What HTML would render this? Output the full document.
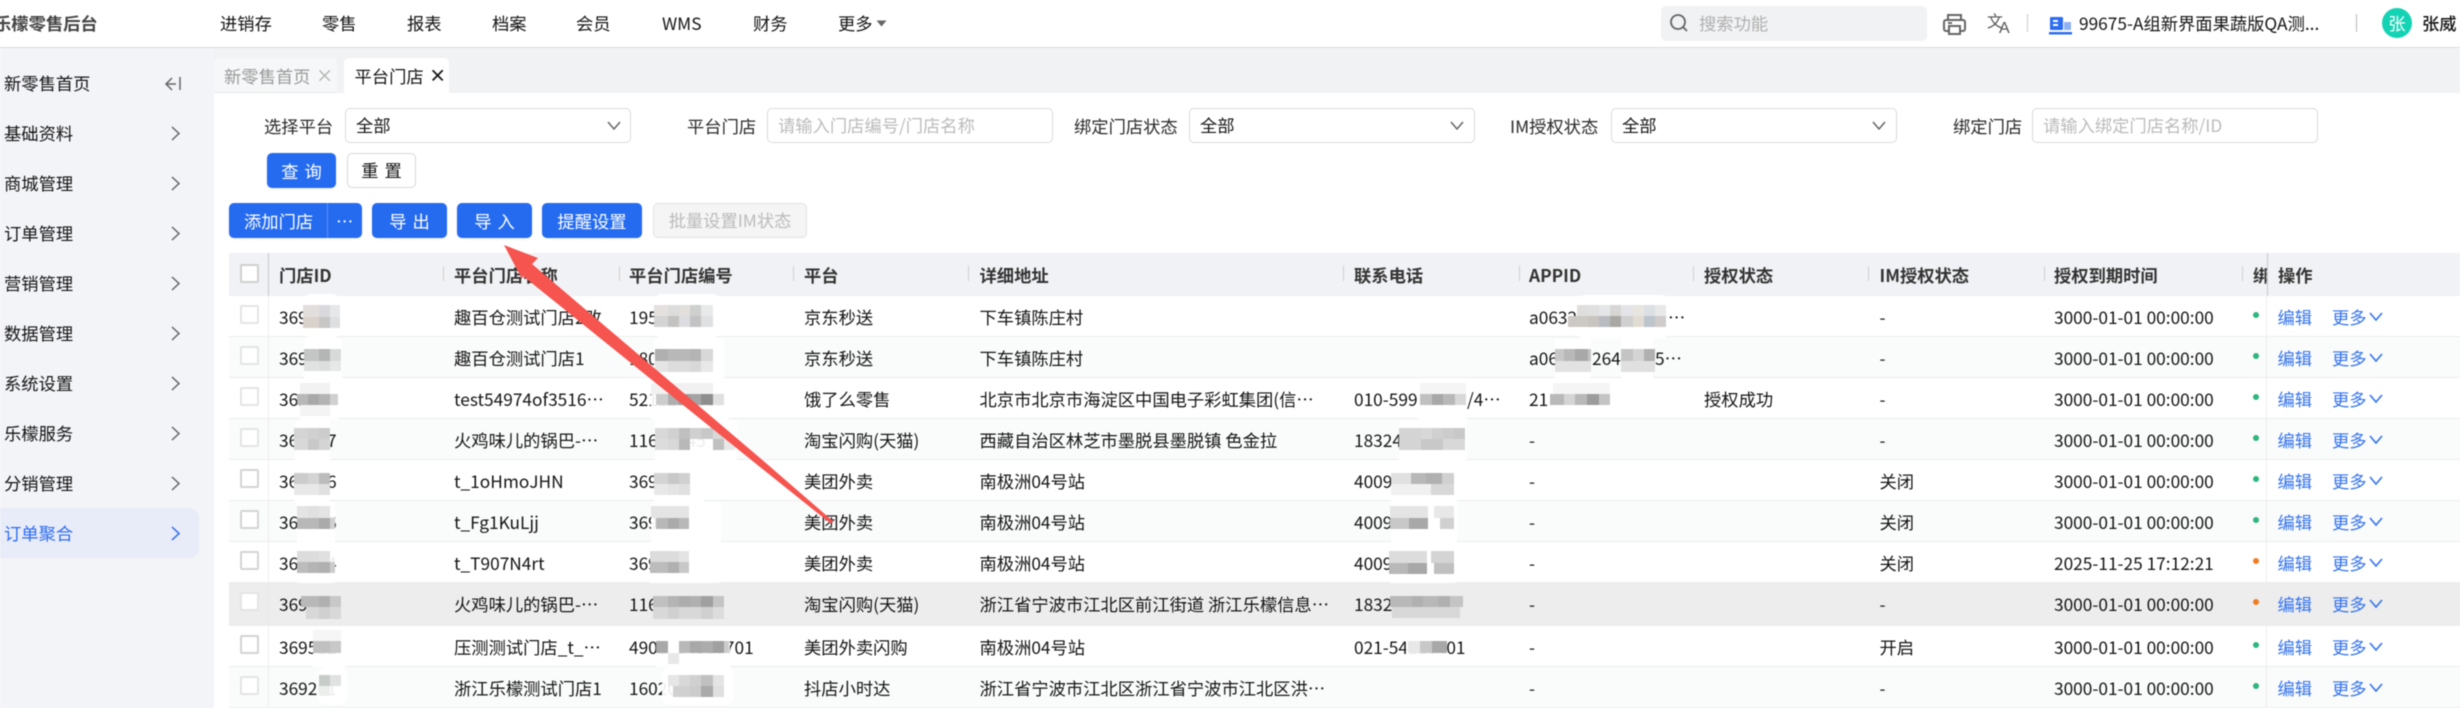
<!DOCTYPE html>
<html lang="zh"><head><meta charset="utf-8"><title>平台门店</title>
<style>
*{box-sizing:border-box;margin:0;padding:0}
html,body{width:2460px;height:708px;overflow:hidden;background:#fff}
body{position:relative;font:17.3px/1.2 "Liberation Sans","Noto Sans CJK SC",sans-serif;color:#151515;font-family:"Noto Sans CJK SC","Liberation Sans",sans-serif;filter:blur(.4px)}
.a{position:absolute;white-space:nowrap}
.top{left:0;top:0;width:2460px;height:48px;background:#fff;border-bottom:1px solid #dcdcdc;box-shadow:0 1px 1px #eee}
.n{top:0;line-height:46px}
.side{left:0;top:48px;width:214px;height:660px;background:#f3f4f8}
.si{left:4px;line-height:24px}
.tabs{left:214px;top:48px;width:2246px;height:45px;background:#f1f2f4}
.in{top:108px;height:35px;width:286px;border:1.5px solid #dadada;border-radius:5px;background:#fff;line-height:31px;padding-left:10px}
.lb{top:108px;line-height:35px;color:#2a2a2a}
.ph{color:#bbb}
.btn{height:35px;line-height:35px;background:#256bf0;color:#fff;border-radius:5px;text-align:center;box-shadow:0 1px 2px rgba(0,0,0,.08)}
.th{left:229px;top:253px;width:2231px;height:43px;background:#f1f2f5}
.th span{position:absolute;top:0;line-height:43px;font-weight:700;color:#333;white-space:nowrap}
.th i{position:absolute;top:13px;width:1px;height:15px;background:#cfcfcf}
.r{position:absolute;left:229px;width:2231px;border-bottom:1.5px solid #ececec;background:#fff}
.r.g{background:#fafbfb}.r.h{background:#ededed;border-bottom-color:#ededed}
.r span{position:absolute;top:0;white-space:nowrap;line-height:41px}
.r b{position:absolute;left:11px;top:9px;width:19px;height:19px;border:2px solid #e4e4e4;border-radius:2px;background:#fff}
.r u{position:absolute;left:39px;top:0;bottom:0;width:1px;background:#eee}
.r s{position:absolute;left:2037px;top:0;bottom:0;width:1px;background:#eee}
.r em{position:absolute;left:2024px;top:16px;width:6px;height:6px;border-radius:50%;background:#2eb67d}
.r em.o{background:#f07d22}
.id{left:50px}.nm{left:225px}.pi{left:400px}.pl{left:575px}.ad{left:750.5px}.ph2{left:1125px}.ap{left:1300px}.au{left:1475px}.im{left:1650.5px}.tm{left:1825px}
.r span.e{left:2048.5px;color:#3574ee}.r span.m{left:2103px;color:#3574ee}
.r svg{position:absolute;left:2140px;top:15.5px}
</style></head><body>

<div class="a top"></div>
<div class="a n" style="left:-6px;font-weight:700;color:#444">乐檬零售后台</div>
<div class="a n" style="left:220px">进销存</div>
<div class="a n" style="left:322px">零售</div>
<div class="a n" style="left:407px">报表</div>
<div class="a n" style="left:492px">档案</div>
<div class="a n" style="left:576px">会员</div>
<div class="a n" style="left:662px">WMS</div>
<div class="a n" style="left:753px">财务</div>
<div class="a n" style="left:838px">更多</div>
<svg class="a" style="left:876px;top:20px" width="11" height="7"><path d="M0.5 0.5h10L5.5 6.5z" fill="#666"/></svg>

<div class="a" style="left:1661px;top:6px;width:266px;height:35px;background:#f1f2f4;border-radius:5px"></div>
<svg class="a" style="left:1669px;top:14px" width="20" height="18" fill="none" stroke="#666" stroke-width="1.8"><circle cx="9" cy="8" r="7"/><path d="M14 13l4 4"/></svg>
<div class="a n" style="left:1699px;color:#b0b0b0">搜索功能</div>
<svg class="a" style="left:1943px;top:13px" width="23" height="22" fill="none" stroke="#666" stroke-width="2"><path d="M5 7V2h13v5"/><rect x="1" y="7" width="21" height="11" rx="2"/><rect x="6" y="13" width="11" height="8" fill="#fff"/><path d="M5 10h4"/></svg>
<svg class="a" style="left:1987px;top:11px" width="26" height="24"><text x="0" y="16" font-size="16" fill="#555" font-family="Noto Sans CJK SC,sans-serif">文</text><text x="12" y="22" font-size="16" fill="#555" font-family="Liberation Sans,sans-serif">A</text></svg>
<div class="a" style="left:2027px;top:14px;width:1px;height:18px;background:#ccc"></div>
<svg class="a" style="left:2049px;top:17px" width="23" height="18"><rect x="1" y="0" width="13" height="13" rx="1" fill="#2b6cf0"/><rect x="15" y="5" width="7" height="8" fill="#8fb2f5"/><rect x="0" y="15" width="23" height="2.5" fill="#2b6cf0"/><rect x="4" y="3" width="5" height="2" fill="#fff"/><rect x="4" y="7" width="5" height="2" fill="#fff"/></svg>
<div class="a n" style="left:2079px">99675-A组新界面果蔬版QA测...</div>
<div class="a" style="left:2356px;top:14px;width:1px;height:18px;background:#bbb"></div>
<div class="a" style="left:2382px;top:8px;width:30px;height:30px;border-radius:50%;background:#14d3b5;color:#fff;text-align:center;line-height:29px">张</div>
<div class="a n" style="left:2422px;font-weight:500">张威</div>

<div class="a side"></div>
<div class="a" style="left:0;top:508px;width:199px;height:50px;background:#e8ebf8;border-radius:0 10px 10px 0"></div>
<div class="a si" style="top:71px">新零售首页</div>
<div class="a si" style="top:121px">基础资料</div>
<div class="a si" style="top:171px">商城管理</div>
<div class="a si" style="top:221px">订单管理</div>
<div class="a si" style="top:271px">营销管理</div>
<div class="a si" style="top:321px">数据管理</div>
<div class="a si" style="top:371px">系统设置</div>
<div class="a si" style="top:421px">乐檬服务</div>
<div class="a si" style="top:471px">分销管理</div>
<div class="a si" style="top:521px;color:#2b6bf3">订单聚合</div>
<svg class="a" style="left:0;top:0" width="214" height="708" fill="none" stroke="#666" stroke-width="1.5">
<path d="M172 78l-6 6 6 6M166 84h10M180 77v13"/>
<path d="M172 127l7 6.500-7 6.500M172 177l7 6.500-7 6.500M172 227l7 6.500-7 6.500M172 277l7 6.500-7 6.500M172 327l7 6.500-7 6.500M172 377l7 6.500-7 6.500M172 427l7 6.500-7 6.500M172 477l7 6.500-7 6.500"/>
<path d="M172 527l7 6.500-7 6.500" stroke="#2b6bf3"/>
</svg>

<div class="a tabs"></div>
<div class="a" style="left:214px;top:58px;width:123px;height:35px;background:#f6f7f8;border-radius:5px 5px 0 0;border-bottom:1px solid #e6e6e6"></div>
<div class="a" style="left:224px;top:58px;line-height:35px;color:#999">新零售首页</div>
<div class="a" style="left:316px;top:57px;line-height:35px;color:#aaa">×</div>
<div class="a" style="left:344px;top:58px;width:105px;height:35px;background:#fff;border-radius:5px 5px 0 0"></div>
<div class="a" style="left:354.500px;top:58px;line-height:35px">平台门店</div>
<div class="a" style="left:429px;top:57px;line-height:35px;font-weight:700">×</div>

<div class="a lb" style="left:264px">选择平台</div>
<div class="a in" style="left:345px">全部</div>
<div class="a lb" style="left:687px">平台门店</div>
<div class="a in ph" style="left:767px">请输入门店编号/门店名称</div>
<div class="a lb" style="left:1074px">绑定门店状态</div>
<div class="a in" style="left:1189px">全部</div>
<div class="a lb" style="left:1510px">IM授权状态</div>
<div class="a in" style="left:1611px">全部</div>
<div class="a lb" style="left:1953px">绑定门店</div>
<div class="a in ph" style="left:2032px">请输入绑定门店名称/ID</div>
<svg class="a" style="left:0;top:0" width="2460" height="150" fill="none" stroke="#666" stroke-width="1.5"><path d="M608 122l6 7 6-7M1451 122l6 7 6-7M1873 122l6 7 6-7"/></svg>

<div class="a btn" style="left:267px;top:153px;width:69px;letter-spacing:6px;padding-left:6px">查询</div>
<div class="a" style="left:347px;top:153px;width:69px;height:35px;line-height:32px;border:1.5px solid #d8d8d8;border-radius:5px;text-align:center;letter-spacing:6px;padding-left:6px">重置</div>

<div class="a btn" style="left:229px;top:203px;width:133px;text-align:left;padding-left:15px">添加门店</div>
<div class="a" style="left:327px;top:203px;width:1px;height:35px;background:#5c8ff5"></div>
<div class="a" style="left:336px;top:203px;line-height:35px;color:#fff">…</div>
<div class="a btn" style="left:372px;top:203px;width:75px;letter-spacing:6px;padding-left:6px">导出</div>
<div class="a btn" style="left:457px;top:203px;width:75px;letter-spacing:6px;padding-left:6px">导入</div>
<div class="a btn" style="left:542px;top:203px;width:100px">提醒设置</div>
<div class="a" style="left:653px;top:203px;width:154px;height:35px;line-height:32px;background:#f5f5f5;border:1.5px solid #e2e2e2;border-radius:5px;text-align:center;color:#bbb">批量设置IM状态</div>

<div class="a th">
<b style="position:absolute;left:11px;top:11px;width:19px;height:19px;border:2px solid #d0d0d0;border-radius:2px;background:#fff"></b>
<i style="left:39px;top:0;height:43px;background:#c8c8c8"></i>
<span style="left:50px">门店ID</span><i style="left:214px"></i>
<span style="left:225px">平台门店名称</span><i style="left:390px"></i>
<span style="left:400px">平台门店编号</span><i style="left:564px"></i>
<span style="left:575px">平台</span><i style="left:739px"></i>
<span style="left:750.500px">详细地址</span><i style="left:1114px"></i>
<span style="left:1125px">联系电话</span><i style="left:1290px"></i>
<span style="left:1300px">APPID</span><i style="left:1464px"></i>
<span style="left:1475px">授权状态</span><i style="left:1639px"></i>
<span style="left:1650.500px">IM授权状态</span><i style="left:1815px"></i>
<span style="left:1825px">授权到期时间</span><i style="left:2013px"></i>
<span style="left:2024px;width:14px;overflow:hidden">绑定</span>
<i style="left:2038px;top:0;height:43px;background:#c8c8c8"></i>
<span style="left:2049px">操作</span>
</div>

<div class="r" style="top:296px;height:41px"><b></b><u></u><s></s><span class="id">369123</span><span class="nm">趣百仓测试门店2改</span><span class="pi">19512345</span><span class="pl">京东秒送</span><span class="ad">下车镇陈庄村</span><span class="ap">a0632</span><span class="ap" style="left:1439px">…</span><span class="im">-</span><span class="tm">3000-01-01 00:00:00</span><em></em><span class="e">编辑</span><span class="m">更多</span><svg width="15" height="10" fill="none" stroke="#3574ee" stroke-width="1.6"><path d="M1 1l6 7 6-7"/></svg></div>
<div class="r g" style="top:337px;height:41px"><b></b><u></u><s></s><span class="id">369123</span><span class="nm">趣百仓测试门店1</span><span class="pi">18012345</span><span class="pl">京东秒送</span><span class="ad">下车镇陈庄村</span><span class="ap">a06</span><span class="ap" style="left:1363px">264</span><span class="ap" style="left:1426px">5…</span><span class="im">-</span><span class="tm">3000-01-01 00:00:00</span><em></em><span class="e">编辑</span><span class="m">更多</span><svg width="15" height="10" fill="none" stroke="#3574ee" stroke-width="1.6"><path d="M1 1l6 7 6-7"/></svg></div>
<div class="r" style="top:378px;height:41px"><b></b><u></u><s></s><span class="id">361234</span><span class="nm">test54974of3516…</span><span class="pi">5211234567</span><span class="pl">饿了么零售</span><span class="ad">北京市北京市海淀区中国电子彩虹集团(信…</span><span class="ph2">010-599</span><span class="ph2" style="left:1238px">/4…</span><span class="ap">21</span><span class="au">授权成功</span><span class="im">-</span><span class="tm">3000-01-01 00:00:00</span><em></em><span class="e">编辑</span><span class="m">更多</span><svg width="15" height="10" fill="none" stroke="#3574ee" stroke-width="1.6"><path d="M1 1l6 7 6-7"/></svg></div>
<div class="r g" style="top:419px;height:41px"><b></b><u></u><s></s><span class="id">361237</span><span class="nm">火鸡味儿的锅巴-…</span><span class="pi">11612345</span><span class="pl">淘宝闪购(天猫)</span><span class="ad">西藏自治区林芝市墨脱县墨脱镇 色金拉</span><span class="ph2">18324</span><span class="ap">-</span><span class="im">-</span><span class="tm">3000-01-01 00:00:00</span><em></em><span class="e">编辑</span><span class="m">更多</span><svg width="15" height="10" fill="none" stroke="#3574ee" stroke-width="1.6"><path d="M1 1l6 7 6-7"/></svg></div>
<div class="r" style="top:460px;height:41px"><b style="border-color:#d4d4d4"></b><u></u><s></s><span class="id">361236</span><span class="nm">t_1oHmoJHN</span><span class="pi">369123</span><span class="pl">美团外卖</span><span class="ad">南极洲04号站</span><span class="ph2">4009</span><span class="ap">-</span><span class="im">关闭</span><span class="tm">3000-01-01 00:00:00</span><em></em><span class="e">编辑</span><span class="m">更多</span><svg width="15" height="10" fill="none" stroke="#3574ee" stroke-width="1.6"><path d="M1 1l6 7 6-7"/></svg></div>
<div class="r g" style="top:501px;height:41px"><b style="border-color:#d4d4d4"></b><u></u><s></s><span class="id">361236</span><span class="nm">t_Fg1KuLjj</span><span class="pi">369123</span><span class="pl">美团外卖</span><span class="ad">南极洲04号站</span><span class="ph2">4009</span><span class="ap">-</span><span class="im">关闭</span><span class="tm">3000-01-01 00:00:00</span><em></em><span class="e">编辑</span><span class="m">更多</span><svg width="15" height="10" fill="none" stroke="#3574ee" stroke-width="1.6"><path d="M1 1l6 7 6-7"/></svg></div>
<div class="r" style="top:542px;height:41px"><b style="border-color:#d4d4d4"></b><u></u><s></s><span class="id">361234</span><span class="nm">t_T907N4rt</span><span class="pi">369123</span><span class="pl">美团外卖</span><span class="ad">南极洲04号站</span><span class="ph2">4009</span><span class="ap">-</span><span class="im">关闭</span><span class="tm">2025-11-25 17:12:21</span><em class="o"></em><span class="e">编辑</span><span class="m">更多</span><svg width="15" height="10" fill="none" stroke="#3574ee" stroke-width="1.6"><path d="M1 1l6 7 6-7"/></svg></div>
<div class="r h" style="top:583px;height:43px"><b></b><u style="background:#e6e6e6"></u><span class="id">369123</span><span class="nm">火鸡味儿的锅巴-…</span><span class="pi">11612345</span><span class="pl">淘宝闪购(天猫)</span><span class="ad">浙江省宁波市江北区前江街道 浙江乐檬信息…</span><span class="ph2">1832</span><span class="ap">-</span><span class="im">-</span><span class="tm">3000-01-01 00:00:00</span><em class="o"></em><span class="e">编辑</span><span class="m">更多</span><svg width="15" height="10" fill="none" stroke="#3574ee" stroke-width="1.6"><path d="M1 1l6 7 6-7"/></svg></div>
<div class="r" style="top:626px;height:41px"><b style="border-color:#d4d4d4"></b><u></u><s></s><span class="id">369512</span><span class="nm">压测测试门店_t_…</span><span class="pi">4901234567701</span><span class="pl">美团外卖闪购</span><span class="ad">南极洲04号站</span><span class="ph2">021-54123401</span><span class="ap">-</span><span class="im">开启</span><span class="tm">3000-01-01 00:00:00</span><em></em><span class="e">编辑</span><span class="m">更多</span><svg width="15" height="10" fill="none" stroke="#3574ee" stroke-width="1.6"><path d="M1 1l6 7 6-7"/></svg></div>
<div class="r g" style="top:667px;height:41px"><b></b><u></u><s></s><span class="id">369201</span><span class="nm">浙江乐檬测试门店1</span><span class="pi">1602012345</span><span class="pl">抖店小时达</span><span class="ad">浙江省宁波市江北区浙江省宁波市江北区洪…</span><span class="ap">-</span><span class="im">-</span><span class="tm">3000-01-01 00:00:00</span><em></em><span class="e">编辑</span><span class="m">更多</span><svg width="15" height="10" fill="none" stroke="#3574ee" stroke-width="1.6"><path d="M1 1l6 7 6-7"/></svg></div>

<svg class="a" style="left:0;top:0" width="2460" height="708">
<!-- white smears -->
<g fill="#fff" fill-opacity=".92">
<rect x="303" y="294" width="37" height="44" rx="8"/><rect x="304" y="338" width="38" height="42"/><rect x="300" y="380" width="38" height="40"/><rect x="295" y="420" width="35" height="41"/><rect x="294" y="461" width="36" height="41"/><rect x="297" y="502" width="38" height="41"/><rect x="297" y="543" width="38" height="40"/><rect x="313" y="627" width="34" height="40"/><rect x="318" y="667" width="29" height="38" rx="8"/>
<rect x="654" y="294" width="66" height="44" rx="8"/><rect x="654" y="338" width="70" height="42"/><rect x="651" y="380" width="78" height="40"/><rect x="655" y="420" width="82" height="41"/><rect x="654" y="461" width="50" height="41"/><rect x="651" y="502" width="70" height="41"/><rect x="650" y="543" width="70" height="40"/><rect x="656" y="627" width="74" height="40"/><rect x="662" y="667" width="72" height="38" rx="8"/>
<rect x="1418" y="379" width="48" height="41"/><rect x="1399" y="420" width="68" height="41"/><rect x="1391" y="461" width="66" height="41"/><rect x="1391" y="502" width="66" height="41"/><rect x="1390" y="543" width="66" height="40"/><rect x="1406" y="627" width="41" height="38"/>
<rect x="1577" y="295" width="92" height="44" rx="8"/><rect x="1555" y="339" width="36" height="40"/><rect x="1621" y="339" width="32" height="40"/><rect x="1550" y="380" width="60" height="38"/>
</g>
<g shape-rendering="crispEdges">
<!-- ID col -->
<rect x="303" y="305" width="16" height="12" fill="#e2dedb"/><rect x="319" y="305" width="11" height="12" fill="#d9d9dd"/><rect x="330" y="305" width="10" height="12" fill="#e5e7e8"/><rect x="303" y="317" width="16" height="11" fill="#d9d1cc"/><rect x="319" y="317" width="11" height="11" fill="#c8c6c4"/><rect x="330" y="317" width="10" height="11" fill="#dddfe1"/>
<rect x="304" y="349" width="15" height="12" fill="#c4c6c6"/><rect x="319" y="349" width="11" height="12" fill="#b4b6b6"/><rect x="330" y="349" width="11" height="12" fill="#d8dada"/><rect x="304" y="361" width="15" height="10" fill="#e0e2e2"/><rect x="319" y="361" width="11" height="10" fill="#dcdede"/><rect x="330" y="361" width="11" height="10" fill="#e6e8e8"/>
<rect x="300" y="383" width="30" height="11" fill="#f2f2f2"/><rect x="297" y="394" width="11" height="11" fill="#b8b8b8"/><rect x="308" y="394" width="11" height="11" fill="#a8a8a8"/><rect x="319" y="394" width="11" height="11" fill="#b4b4b4"/><rect x="330" y="394" width="8" height="11" fill="#d0d0d0"/><rect x="300" y="405" width="30" height="11" fill="#f4f4f4"/>
<rect x="294" y="428" width="14" height="11" fill="#d4d4d4"/><rect x="308" y="428" width="11" height="11" fill="#d0d0d0"/><rect x="319" y="428" width="11" height="11" fill="#ccc"/><rect x="294" y="439" width="14" height="11" fill="#d8d8d8"/><rect x="308" y="439" width="11" height="11" fill="#c8c8c8"/><rect x="319" y="439" width="11" height="11" fill="#d4d4d4"/>
<rect x="294" y="473" width="14" height="11" fill="#ccc"/><rect x="308" y="473" width="11" height="11" fill="#d4d4d4"/><rect x="319" y="473" width="11" height="11" fill="#bcbcbc"/><rect x="294" y="484" width="14" height="11" fill="#e8e8e8"/><rect x="308" y="484" width="11" height="11" fill="#e8e8e8"/><rect x="319" y="484" width="11" height="11" fill="#e0e0e0"/>
<rect x="297" y="506" width="11" height="12" fill="#e4e4e4"/><rect x="308" y="506" width="11" height="12" fill="#e0e0e0"/><rect x="319" y="506" width="11" height="12" fill="#e4e4e4"/><rect x="297" y="518" width="11" height="11" fill="#b8b8b8"/><rect x="308" y="518" width="11" height="11" fill="#b8b8b8"/><rect x="319" y="518" width="11" height="11" fill="#aaa"/><rect x="330" y="518" width="5" height="11" fill="#d0d0d0"/>
<rect x="297" y="551" width="11" height="11" fill="#dcdcdc"/><rect x="308" y="551" width="11" height="11" fill="#dcdcdc"/><rect x="319" y="551" width="11" height="11" fill="#e0e0e0"/><rect x="297" y="562" width="11" height="11" fill="#bcbcbc"/><rect x="308" y="562" width="11" height="11" fill="#b4b4b4"/><rect x="319" y="562" width="11" height="11" fill="#b0b0b0"/><rect x="330" y="562" width="5" height="11" fill="#ccc"/>
<rect x="301" y="596" width="18" height="11" fill="#b8b8b8"/><rect x="319" y="596" width="11" height="11" fill="#b0b0b0"/><rect x="330" y="596" width="11" height="11" fill="#c8c8c8"/><rect x="306" y="607" width="13" height="12" fill="#d8d8d8"/><rect x="319" y="607" width="11" height="12" fill="#d0d0d0"/><rect x="330" y="607" width="11" height="12" fill="#d8d8d8"/>
<rect x="313" y="630" width="28" height="11" fill="#f6f6f6"/><rect x="313" y="641" width="17" height="12" fill="#c0c0c0"/><rect x="330" y="641" width="11" height="12" fill="#c8c8c8"/>
<rect x="319" y="675" width="11" height="11" fill="#c8ccc8"/><rect x="330" y="675" width="11" height="11" fill="#e0e2e2"/><rect x="319" y="686" width="11" height="10" fill="#eceeec"/>
<!-- platform id col -->
<rect x="654" y="305" width="14" height="11" fill="#e4e0de"/><rect x="668" y="305" width="11" height="11" fill="#dcdcdc"/><rect x="679" y="305" width="11" height="11" fill="#e2dedc"/><rect x="690" y="305" width="11" height="11" fill="#ced0d0"/><rect x="701" y="305" width="12" height="11" fill="#e8eaea"/>
<rect x="654" y="316" width="14" height="11" fill="#d4d4d4"/><rect x="668" y="316" width="11" height="11" fill="#c4c2c0"/><rect x="679" y="316" width="11" height="11" fill="#dcdce0"/><rect x="690" y="316" width="11" height="11" fill="#c4c2c2"/><rect x="701" y="316" width="12" height="11" fill="#dfe0e2"/>
<rect x="655" y="349" width="13" height="12" fill="#b0b0b0"/><rect x="668" y="349" width="11" height="12" fill="#b8b8b8"/><rect x="679" y="349" width="11" height="12" fill="#b8b8b8"/><rect x="690" y="349" width="11" height="12" fill="#b4b4b4"/><rect x="701" y="349" width="12" height="12" fill="#d8d8d8"/>
<rect x="655" y="361" width="13" height="11" fill="#e4e4e4"/><rect x="668" y="361" width="11" height="11" fill="#dcdcdc"/><rect x="679" y="361" width="11" height="11" fill="#dcdcdc"/><rect x="690" y="361" width="11" height="11" fill="#d8d8d8"/><rect x="701" y="361" width="12" height="11" fill="#e8e8e8"/>
<rect x="651" y="383" width="62" height="11" fill="#f1f1f1"/><rect x="656" y="394" width="12" height="11" fill="#ccc"/><rect x="668" y="394" width="11" height="11" fill="#aeaeae"/><rect x="679" y="394" width="11" height="11" fill="#9e9e9e"/><rect x="690" y="394" width="11" height="11" fill="#a4a4a4"/><rect x="701" y="394" width="12" height="11" fill="#8e8e8e"/><rect x="713" y="394" width="11" height="11" fill="#e0e0e0"/>
<rect x="655" y="428" width="13" height="11" fill="#d8d8d8"/><rect x="668" y="428" width="11" height="11" fill="#d0d0d0"/><rect x="679" y="428" width="11" height="11" fill="#c0c0c0"/><rect x="690" y="428" width="11" height="11" fill="#d0d0d0"/><rect x="701" y="428" width="12" height="11" fill="#c8c8c8"/><rect x="713" y="428" width="11" height="11" fill="#d8d8d8"/>
<rect x="655" y="439" width="13" height="11" fill="#dcdcdc"/><rect x="668" y="439" width="11" height="11" fill="#d8d8d8"/><rect x="679" y="439" width="11" height="11" fill="#b8b8b8"/><rect x="713" y="439" width="11" height="11" fill="#c0c0c0"/><rect x="724" y="439" width="11" height="11" fill="#e8e8e8"/>
<rect x="654" y="473" width="14" height="11" fill="#d4d4d4"/><rect x="668" y="473" width="11" height="11" fill="#c8c8c8"/><rect x="679" y="473" width="11" height="11" fill="#d0d0d0"/><rect x="654" y="484" width="14" height="11" fill="#e8e8e8"/><rect x="668" y="484" width="11" height="11" fill="#e4e4e4"/><rect x="679" y="484" width="11" height="11" fill="#e0e0e0"/>
<rect x="651" y="506" width="38" height="12" fill="#e4e4e4"/><rect x="656" y="518" width="12" height="11" fill="#b8b8b8"/><rect x="668" y="518" width="11" height="11" fill="#aaa"/><rect x="679" y="518" width="10" height="11" fill="#b8b8b8"/>
<rect x="650" y="551" width="18" height="11" fill="#dcdcdc"/><rect x="668" y="551" width="11" height="11" fill="#dcdcdc"/><rect x="679" y="551" width="10" height="11" fill="#e4e4e4"/><rect x="650" y="562" width="18" height="11" fill="#bcbcbc"/><rect x="668" y="562" width="11" height="11" fill="#b0b0b0"/><rect x="679" y="562" width="10" height="11" fill="#c8c8c8"/>
<rect x="653" y="596" width="15" height="11" fill="#c0c0c0"/><rect x="668" y="596" width="11" height="11" fill="#b4b4b4"/><rect x="679" y="596" width="11" height="11" fill="#acacac"/><rect x="690" y="596" width="11" height="11" fill="#b0b0b0"/><rect x="701" y="596" width="12" height="11" fill="#a0a0a0"/><rect x="713" y="596" width="11" height="11" fill="#c4c4c4"/>
<rect x="653" y="607" width="15" height="12" fill="#d8d8d8"/><rect x="668" y="607" width="11" height="12" fill="#d0d0d0"/><rect x="679" y="607" width="11" height="12" fill="#d8d8d8"/><rect x="690" y="607" width="11" height="12" fill="#d8d8d8"/><rect x="701" y="607" width="12" height="12" fill="#d0d0d0"/><rect x="713" y="607" width="11" height="12" fill="#dcdcdc"/>
<rect x="656" y="641" width="12" height="12" fill="#a8a8a8"/><rect x="668" y="641" width="11" height="12" fill="#fff"/><rect x="679" y="641" width="11" height="12" fill="#b8b8b8"/><rect x="690" y="641" width="11" height="12" fill="#a8a8a8"/><rect x="701" y="641" width="12" height="12" fill="#acacac"/><rect x="713" y="641" width="11" height="12" fill="#a0a0a0"/><rect x="724" y="641" width="5" height="12" fill="#ccc"/><rect x="668" y="653" width="11" height="11" fill="#e8e8e8"/>
<rect x="668" y="675" width="11" height="11" fill="#e6e6e6"/><rect x="679" y="675" width="11" height="11" fill="#d8d8d8"/><rect x="690" y="675" width="11" height="11" fill="#d0d0d0"/><rect x="701" y="675" width="12" height="11" fill="#c0c0c0"/><rect x="713" y="675" width="11" height="11" fill="#e4e4e4"/>
<rect x="673" y="686" width="17" height="11" fill="#d0d0d0"/><rect x="690" y="686" width="11" height="11" fill="#ccc"/><rect x="701" y="686" width="12" height="11" fill="#aaa"/><rect x="713" y="686" width="11" height="11" fill="#e0e0e0"/>
<!-- phone col -->
<rect x="1420" y="394" width="12" height="11" fill="#c0c0c0"/><rect x="1432" y="394" width="11" height="11" fill="#a8a8a8"/><rect x="1443" y="394" width="12" height="11" fill="#b8b8b8"/><rect x="1455" y="394" width="11" height="11" fill="#d8d8d8"/><rect x="1420" y="383" width="46" height="11" fill="#f5f5f5"/>
<rect x="1399" y="428" width="22" height="11" fill="#d4d4d4"/><rect x="1421" y="428" width="11" height="11" fill="#d8d8d8"/><rect x="1432" y="428" width="11" height="11" fill="#d0d0d0"/><rect x="1443" y="428" width="11" height="11" fill="#ccc"/><rect x="1454" y="428" width="11" height="11" fill="#c8c8c8"/>
<rect x="1399" y="439" width="22" height="11" fill="#d4d4d4"/><rect x="1421" y="439" width="11" height="11" fill="#c8c8c8"/><rect x="1432" y="439" width="11" height="11" fill="#c8c8c8"/><rect x="1443" y="439" width="11" height="11" fill="#d8d8d8"/><rect x="1454" y="439" width="11" height="11" fill="#d8d8d8"/>
<rect x="1391" y="473" width="20" height="11" fill="#e0e0e0"/><rect x="1411" y="473" width="15" height="11" fill="#b8b8b8"/><rect x="1426" y="473" width="16" height="11" fill="#b0b0b0"/><rect x="1442" y="473" width="12" height="11" fill="#d0d0d0"/><rect x="1391" y="484" width="40" height="11" fill="#f0f0f0"/><rect x="1431" y="484" width="23" height="11" fill="#d8d8d8"/>
<rect x="1390" y="506" width="38" height="12" fill="#e4e4e4"/><rect x="1434" y="506" width="20" height="12" fill="#e8e8e8"/><rect x="1390" y="518" width="19" height="11" fill="#c8c8c8"/><rect x="1409" y="518" width="19" height="11" fill="#a8a8a8"/><rect x="1440" y="518" width="14" height="11" fill="#d0d0d0"/>
<rect x="1389" y="551" width="38" height="12" fill="#dcdcdc"/><rect x="1431" y="551" width="23" height="12" fill="#d4d4d4"/><rect x="1389" y="563" width="19" height="11" fill="#b8b8b8"/><rect x="1408" y="563" width="19" height="11" fill="#a8a8a8"/><rect x="1434" y="563" width="20" height="11" fill="#c0c0c0"/>
<rect x="1390" y="596" width="22" height="11" fill="#b8b8b8"/><rect x="1412" y="596" width="11" height="11" fill="#b0b0b0"/><rect x="1423" y="596" width="15" height="11" fill="#b8b8b8"/><rect x="1438" y="596" width="12" height="11" fill="#b0b0b0"/><rect x="1450" y="596" width="13" height="11" fill="#c4c4c4"/><rect x="1392" y="607" width="68" height="11" fill="#d8d8d8"/>
<rect x="1408" y="641" width="12" height="12" fill="#e8e8e8"/><rect x="1420" y="641" width="12" height="12" fill="#c8c8c8"/><rect x="1432" y="641" width="15" height="12" fill="#a8a8a8"/>
<!-- appid col -->
<rect x="1577" y="305" width="11" height="11" fill="#e0dedc"/><rect x="1588" y="305" width="11" height="11" fill="#e0e0e0"/><rect x="1599" y="305" width="11" height="11" fill="#e4e6e8"/><rect x="1610" y="305" width="11" height="11" fill="#d8d6d4"/><rect x="1621" y="305" width="12" height="11" fill="#e4e4e8"/><rect x="1633" y="305" width="11" height="11" fill="#e8e4e0"/><rect x="1644" y="305" width="11" height="11" fill="#dce0e4"/><rect x="1655" y="305" width="11" height="11" fill="#e8e8e8"/>
<rect x="1568" y="316" width="20" height="11" fill="#ccc8c4"/><rect x="1588" y="316" width="11" height="11" fill="#c8c4c0"/><rect x="1599" y="316" width="11" height="11" fill="#b8bcc0"/><rect x="1610" y="316" width="11" height="11" fill="#aaa8a4"/><rect x="1621" y="316" width="12" height="11" fill="#d0d0d0"/><rect x="1633" y="316" width="11" height="11" fill="#e0dcd4"/><rect x="1644" y="316" width="11" height="11" fill="#bcc4cc"/><rect x="1655" y="316" width="11" height="11" fill="#d0cccc"/>
<rect x="1555" y="349" width="9" height="12" fill="#c8c8c8"/><rect x="1564" y="349" width="11" height="12" fill="#b8b8b8"/><rect x="1575" y="349" width="13" height="12" fill="#a8a8a8"/><rect x="1588" y="349" width="3" height="12" fill="#c4c4c4"/><rect x="1621" y="349" width="12" height="12" fill="#c4c4c4"/><rect x="1633" y="349" width="11" height="12" fill="#d4d4d4"/><rect x="1644" y="349" width="11" height="12" fill="#b0b0b0"/>
<rect x="1555" y="361" width="36" height="11" fill="#e2e2e2"/><rect x="1621" y="361" width="34" height="11" fill="#e0e0e0"/>
<rect x="1550" y="394" width="14" height="11" fill="#b8b8b8"/><rect x="1564" y="394" width="11" height="11" fill="#d4d4d4"/><rect x="1575" y="394" width="12" height="11" fill="#b8b8b8"/><rect x="1587" y="394" width="12" height="11" fill="#9c9c9c"/><rect x="1599" y="394" width="11" height="11" fill="#c4c4c4"/><rect x="1553" y="383" width="57" height="11" fill="#f5f5f5"/>
</g>
<!-- red arrow -->
<path d="M504 245L538 258L532 264L760 458L834 522L830 523L760 467L523 276L522 279Z" fill="#f5544f"/>
</svg>
</body></html>
